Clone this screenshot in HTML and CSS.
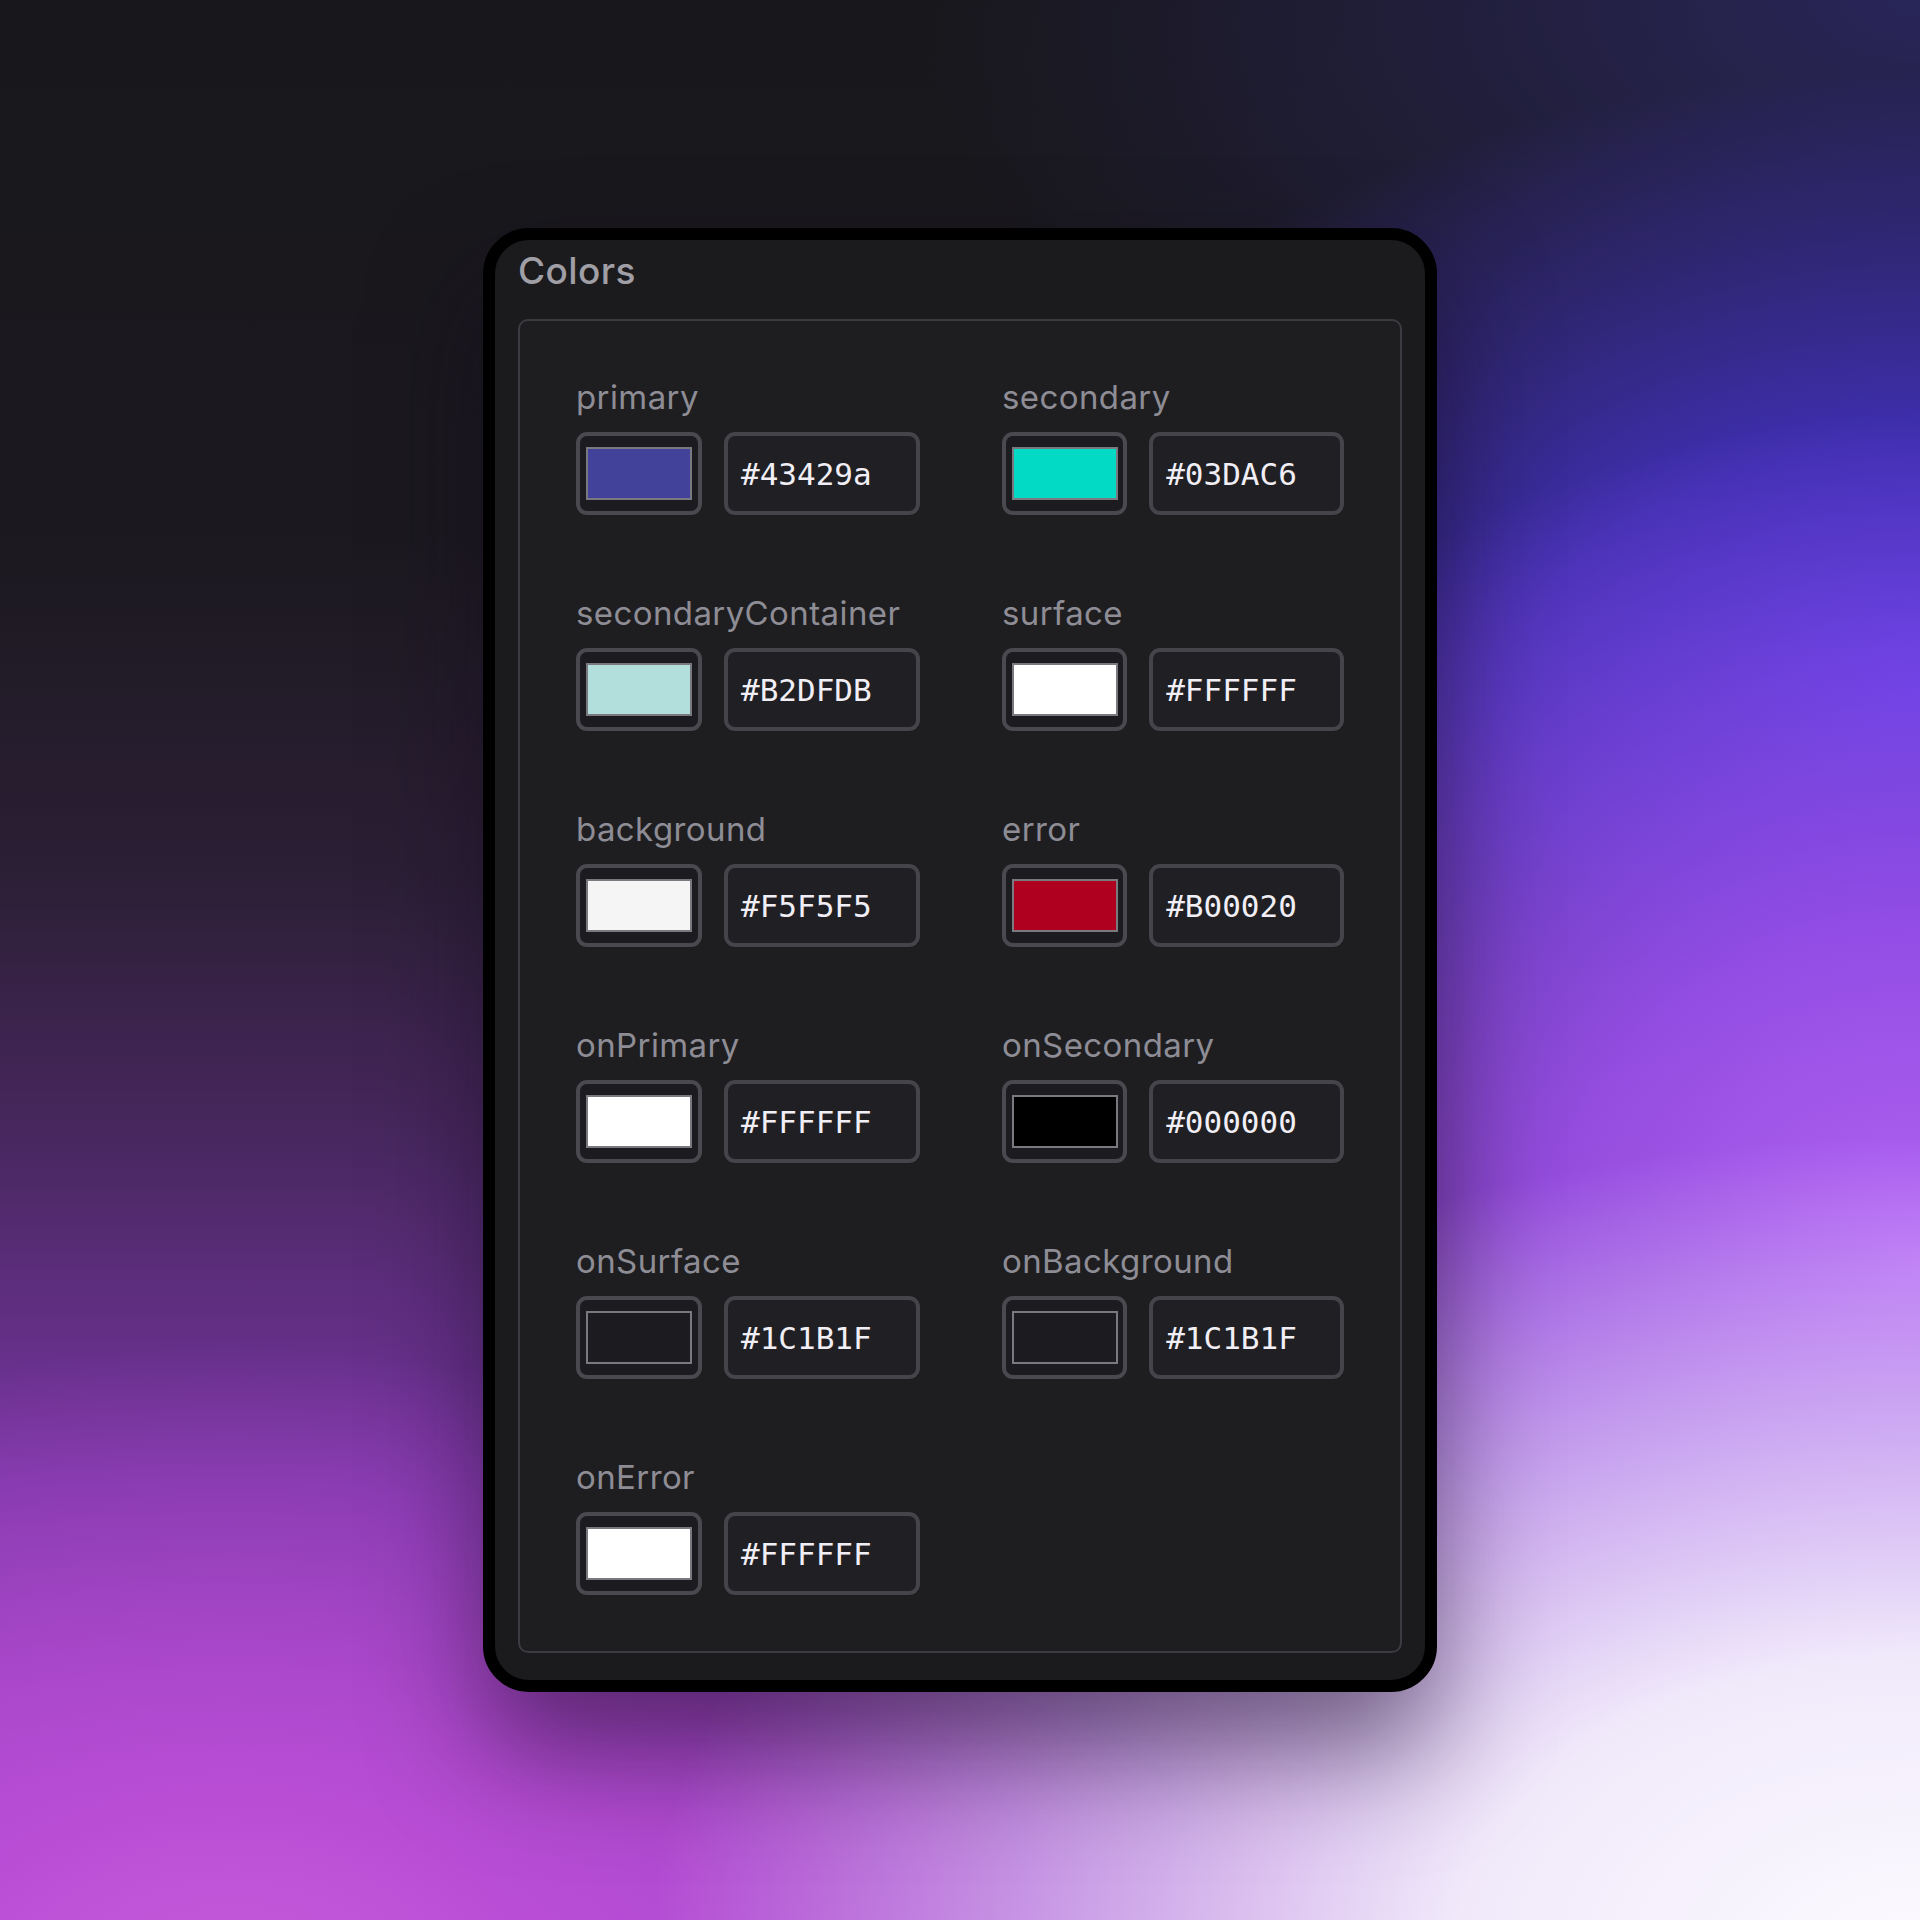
FILE: index.html
```html
<!DOCTYPE html>
<html lang="en">
<head>
<meta charset="utf-8">
<title>Colors</title>
<link rel="stylesheet" href="styles.css">
</head>
<body>
<main class="stage">
  <section class="card">
    <h1 class="title">Colors</h1>
    <div class="panel">
      <div class="grid">
        <div class="item">
          <div class="label">primary</div>
          <div class="row">
            <div class="swatch"><span class="chip" style="background:#43429a"></span></div>
            <div class="hex">#43429a</div>
          </div>
        </div>
        <div class="item">
          <div class="label">secondary</div>
          <div class="row">
            <div class="swatch"><span class="chip" style="background:#03DAC6"></span></div>
            <div class="hex">#03DAC6</div>
          </div>
        </div>
        <div class="item">
          <div class="label">secondaryContainer</div>
          <div class="row">
            <div class="swatch"><span class="chip" style="background:#B2DFDB"></span></div>
            <div class="hex">#B2DFDB</div>
          </div>
        </div>
        <div class="item">
          <div class="label">surface</div>
          <div class="row">
            <div class="swatch"><span class="chip" style="background:#FFFFFF"></span></div>
            <div class="hex">#FFFFFF</div>
          </div>
        </div>
        <div class="item">
          <div class="label">background</div>
          <div class="row">
            <div class="swatch"><span class="chip" style="background:#F5F5F5"></span></div>
            <div class="hex">#F5F5F5</div>
          </div>
        </div>
        <div class="item">
          <div class="label">error</div>
          <div class="row">
            <div class="swatch"><span class="chip" style="background:#B00020"></span></div>
            <div class="hex">#B00020</div>
          </div>
        </div>
        <div class="item">
          <div class="label">onPrimary</div>
          <div class="row">
            <div class="swatch"><span class="chip" style="background:#FFFFFF"></span></div>
            <div class="hex">#FFFFFF</div>
          </div>
        </div>
        <div class="item">
          <div class="label">onSecondary</div>
          <div class="row">
            <div class="swatch"><span class="chip" style="background:#000000"></span></div>
            <div class="hex">#000000</div>
          </div>
        </div>
        <div class="item">
          <div class="label">onSurface</div>
          <div class="row">
            <div class="swatch"><span class="chip" style="background:#1C1B1F"></span></div>
            <div class="hex">#1C1B1F</div>
          </div>
        </div>
        <div class="item">
          <div class="label">onBackground</div>
          <div class="row">
            <div class="swatch"><span class="chip" style="background:#1C1B1F"></span></div>
            <div class="hex">#1C1B1F</div>
          </div>
        </div>
        <div class="item">
          <div class="label">onError</div>
          <div class="row">
            <div class="swatch"><span class="chip" style="background:#FFFFFF"></span></div>
            <div class="hex">#FFFFFF</div>
          </div>
        </div>
      </div>
    </div>
  </section>
</main>
</body>
</html>
```
FILE: styles.css
```css
html, body {
  margin: 0;
  padding: 0;
}

body {
  width: 1920px;
  height: 1920px;
  overflow: hidden;
  font-family: Inter, "Noto Sans", sans-serif;
  background:
    radial-gradient(ellipse 1550px 1000px at 100% 102%, #fcfbff 0%, rgba(244, 240, 252, 0.96) 30%, rgba(222, 205, 245, 0.65) 55%, rgba(205, 175, 240, 0) 82%),
    radial-gradient(ellipse 950px 650px at 12% 104%, rgba(200, 92, 220, 1) 0%, rgba(188, 78, 215, 0.85) 35%, rgba(160, 60, 200, 0) 100%),
    radial-gradient(ellipse 950px 850px at 100% 66%, rgba(180, 100, 246, 1) 0%, rgba(160, 82, 238, 0.85) 40%, rgba(125, 60, 225, 0) 100%),
    radial-gradient(ellipse 1000px 620px at 100% 36%, rgba(78, 56, 222, 1) 0%, rgba(72, 52, 212, 0.8) 40%, rgba(55, 42, 175, 0) 100%),
    radial-gradient(ellipse 1000px 550px at 100% 0%, rgba(42, 38, 92, 0.95) 0%, rgba(35, 32, 70, 0) 100%),
    linear-gradient(180deg, #18171b 0%, #1b191f 28%, #2c1f36 46%, #4a2862 60%, #7a36a6 78%, #a446cc 100%);
}

.stage {
  width: 1920px;
  height: 1920px;
  display: flex;
  align-items: center;
  justify-content: center;
}

.card {
  box-sizing: border-box;
  width: 954px;
  height: 1464px;
  background: #1b1b1e;
  border: 12px solid #000;
  border-radius: 46px;
  padding: 8px 23px 27px;
  box-shadow: 0 60px 110px rgba(20, 10, 30, 0.5);
  display: flex;
  flex-direction: column;
}

.title {
  margin: 0 0 26px;
  font-size: 37px;
  line-height: 45px;
  font-weight: 500;
  letter-spacing: 0.4px;
  color: #a09fa6;
}

.panel {
  box-sizing: border-box;
  border: 2px solid #3c3b41;
  border-radius: 10px;
  background: #1e1e21;
  padding: 56px;
  flex: 1;
}

.grid {
  display: grid;
  grid-template-columns: 344px 342px;
  justify-content: space-between;
  row-gap: 78px;
}

.label {
  font-size: 33px;
  line-height: 40px;
  letter-spacing: 0.4px;
  color: #8e8d95;
  margin-bottom: 15px;
  white-space: nowrap;
}

.row {
  display: flex;
  gap: 22px;
}

.swatch {
  box-sizing: border-box;
  width: 126px;
  height: 83px;
  border: 4px solid #4a4950;
  border-radius: 11px;
  background: #1c1b1f;
  display: flex;
  align-items: center;
  justify-content: center;
}

.chip {
  box-sizing: border-box;
  width: 106px;
  height: 53px;
  border: 2px solid #7a7980;
}

.hex {
  box-sizing: border-box;
  width: 196px;
  height: 83px;
  border: 4px solid #45444b;
  border-radius: 11px;
  background: #202024;
  padding-left: 13px;
  display: flex;
  align-items: center;
  font-family: "DejaVu Sans Mono", "Liberation Mono", monospace;
  font-size: 31px;
  color: #f1eff5;
}
```
